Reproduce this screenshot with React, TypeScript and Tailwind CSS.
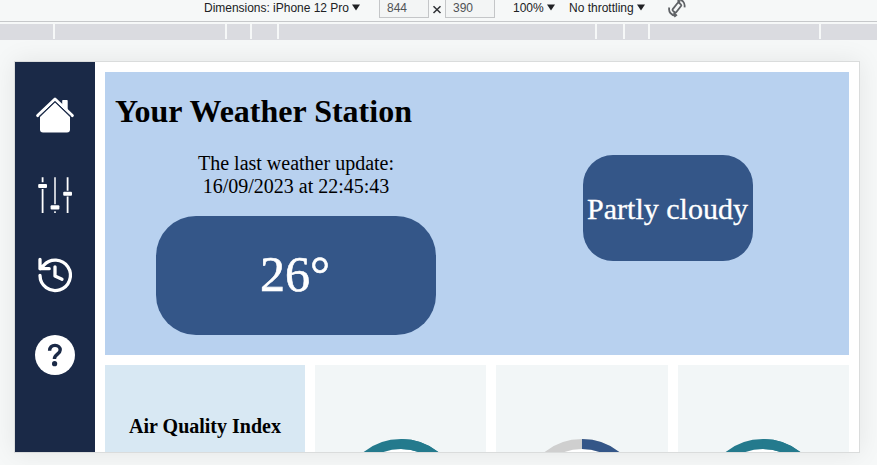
import React from "react";

const marks = ["w-[53px]", "w-[170px]", "w-[23px]", "w-[25px]", "w-[316px]", "w-[26px]", "w-[23px]", "w-[169px]"];

function Toolbar() {
  return (
    <div className="h-[22px] border-b border-[#c6c8ca] overflow-hidden flex items-start text-[12px] leading-[16px] text-[#202124] whitespace-nowrap pl-[204px] font-['Liberation_Sans',Arial,sans-serif]">
      <div className="w-[175px] shrink-0 flex items-center h-4">
        <span className="tracking-[-0.02px]">Dimensions: iPhone 12 Pro</span>
        <Caret />
      </div>
      <div className="w-[50px] h-[18px] border border-t-0 border-[#c4c6c8] text-[#505356] pl-[7px] bg-[#f3f5f5]">844</div>
      <svg className="w-4 h-[18px] shrink-0" viewBox="0 0 16 18" stroke="#303236" strokeWidth="1.5"><path d="M4.500 6.300l7 6.700M11.500 6.300l-7 6.700" /></svg>
      <div className="w-[50px] h-[18px] border border-t-0 border-[#c4c6c8] text-[#505356] pl-[7px] bg-[#f3f5f5]">390</div>
      <div className="w-[74px] pl-[18px] flex items-center h-4 shrink-0"><span>100%</span><Caret /></div>
      <div className="w-[97px] flex items-center h-4 shrink-0"><span>No throttling</span><Caret /></div>
      <svg className="w-[22px] h-[18px] shrink-0" viewBox="0 0 22 18" fill="none" stroke="#5f6266" strokeWidth="1.8">
        <rect x="8.600" y="2.600" width="4.600" height="10" rx="1.200" transform="rotate(38 10.900 7.600)" />
        <path d="M3.300 7.500C2.200 11.500 5.400 15.800 9.800 15.600M18.500 7.400C19.400 3 16.400-.6 12-.6M7.600 12.600l2.600 2.600-2 1.600M13.200-1l-1 2 2 1.400" />
      </svg>
    </div>
  );
}

function Caret() {
  return <svg className="w-2 h-[7px] ml-[3px] -mt-px" viewBox="0 0 8 7" fill="#202124"><path d="M0 .4h8L4 6.6z" /></svg>;
}

function HomeIcon() {
  return (
    <svg className="w-10 h-10" viewBox="0 0 40 40" fill="none">
      <path d="M27.200 5.700a.8.8 0 0 1 .8-.8h3.900a.8.8 0 0 1 .8.8v9.800l-5.500-5z" fill="#fff" />
      <path d="M2.600 20.600 20 4.100 37.400 20.600" stroke="#fff" strokeWidth="2.900" strokeLinecap="round" strokeLinejoin="round" />
      <path d="M20 7.500 35 21.900v12.600a3 3 0 0 1-3 3H8a3 3 0 0 1-3-3V21.900z" fill="#fff" />
      <path d="M4 21.600 20 6.500 36 21.600" stroke="#1a2947" strokeWidth="1" />
    </svg>
  );
}

function SlidersIcon() {
  return (
    <svg className="w-10 h-10" viewBox="0 0 40 40" fill="#fff">
      <path d="M6.700 2.200h1.800v5H6.700zM6.700 14h1.800v24H6.700zM31.700 2.200h1.800v13.600h-1.800zM31.700 21.500h1.800V38h-1.800zM19.200 36.200h1.600V38h-1.600z" />
      <path d="M19 2.200h2v27h-2z" opacity=".75" />
      <rect x="3.200" y="9" width="8.800" height="4" rx="1" />
      <rect x="15.600" y="30.300" width="8.800" height="4.200" rx="1" />
      <rect x="28.200" y="16.700" width="8.800" height="4" rx="1" />
    </svg>
  );
}

function HistoryIcon() {
  return (
    <svg className="w-10 h-10" viewBox="0 0 40 40" fill="none" stroke="#fff" strokeWidth="3.300" strokeLinecap="round" strokeLinejoin="round">
      <path d="M5 20.500a15.200 15.200 0 1 0 3.600-10L5 13.700M5 4.500v9.200h9.200M20 11.800V21l7 3.200" />
    </svg>
  );
}

function HelpIcon() {
  return (
    <svg className="w-10 h-10" viewBox="0 0 40 40" fill="none">
      <circle cx="20" cy="20" r="20" fill="#fff" />
      <path d="M14.600 15.700C14.600 12.300 16.800 10.400 20 10.400S25.200 12.300 25.200 15C25.200 19 19.400 19.400 19.400 24" stroke="#1a2947" strokeWidth="3.400" />
      <circle cx="19.600" cy="28.700" r="2.600" fill="#1a2947" />
    </svg>
  );
}

function Gauge({ track, fill }: { track: string; fill: string }) {
  return (
    <section className="flex-1 bg-[#f2f6f7] flex justify-center pt-[74px]">
      <svg className="w-[120px] h-[120px] shrink-0" viewBox="0 0 120 120" strokeWidth="10">
        <circle cx="60" cy="60" r="55" fill="#fff" stroke={track} />
        <path d="M60 5a55 55 0 0 1 0 110" fill="none" stroke={fill} />
      </svg>
    </section>
  );
}

export default function App() {
  return (
    <div className="h-[465px] w-[877px] overflow-hidden bg-[#f6f8f8] flex flex-col">
      <Toolbar />
      <div className="h-4 mt-0.5 flex shrink-0 bg-[#dadbe0]">
        {marks.map((w, i) => (
          <div key={i} className={`${w} h-[15px] shrink-0 box-content border-r-2 border-[#f6f8f8]`} />
        ))}
      </div>
      <main className="ml-[14px] mt-[21px] w-[846px] h-[392px] shrink-0 border border-[#dadcdc] bg-white shadow-[0_0_24px_rgba(0,0,0,0.08)] flex overflow-hidden font-['Liberation_Serif','Times_New_Roman',serif] text-black">
        <nav className="w-20 shrink-0 bg-[#1a2947] flex flex-col items-center gap-10 pt-[33px]">
          <HomeIcon />
          <SlidersIcon />
          <HistoryIcon />
          <HelpIcon />
        </nav>
        <div className="flex-1 p-[10px] flex flex-col gap-[10px]">
          <section className="h-[283px] shrink-0 bg-[#b8d1ef] flex">
            <div className="w-[382px] px-[10px] pt-[21px] flex flex-col">
              <h1 className="text-[32px] leading-[37px] font-bold whitespace-nowrap">Your Weather Station</h1>
              <p className="mt-[22px] text-center text-[20px] leading-[23px]">The last weather update:<br />16/09/2023 at 22:45:43</p>
              <div className="mt-[18px] self-center w-[280px] h-[119px] pb-0.5 pr-0.5 rounded-[40px] bg-[#345688] text-white text-[50px] [-webkit-text-stroke:0.6px_white] flex items-center justify-center">26°</div>
            </div>
            <div className="flex-1 flex justify-center pt-[83px]">
              <div className="w-[170px] h-[106px] pr-px rounded-[30px] bg-[#345688] text-white text-[30px] [-webkit-text-stroke:0.3px_white] flex items-center justify-center whitespace-nowrap">Partly cloudy</div>
            </div>
          </section>
          <div className="flex-1 flex gap-[10px]">
            <section className="w-[200px] shrink-0 bg-[#d8e8f3] pt-[50px] text-center text-[20px] leading-[23px] font-bold">Air Quality Index</section>
            <Gauge track="#247a8d" fill="#247a8d" />
            <Gauge track="#cfcfcf" fill="#345688" />
            <Gauge track="#247a8d" fill="#247a8d" />
          </div>
        </div>
      </main>
    </div>
  );
}
